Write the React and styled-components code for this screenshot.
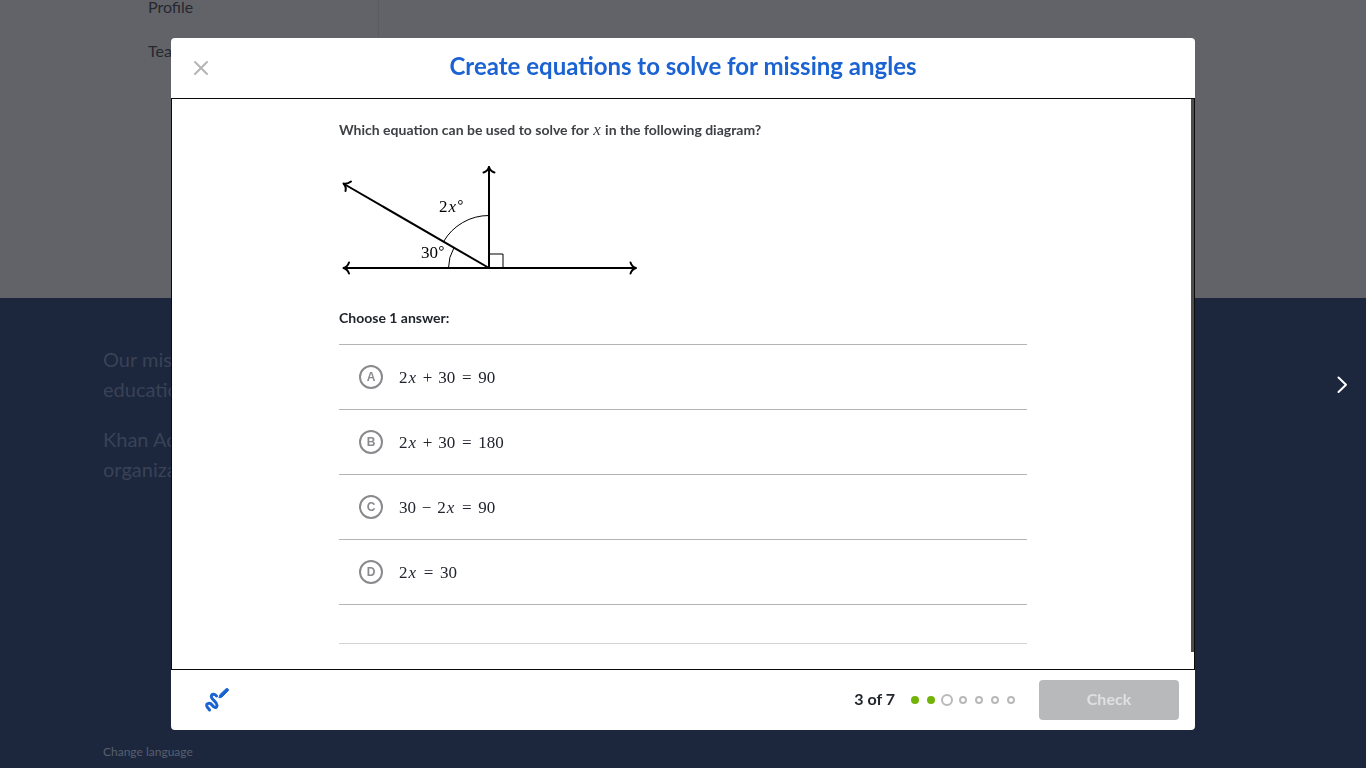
import React, { useState } from 'react';
import styled, { createGlobalStyle } from 'styled-components';

const GlobalStyle = createGlobalStyle`
  * {
    box-sizing: border-box;
  }

  body {
    margin: 0;
    font-family: Lato, 'Noto Sans', sans-serif;
    color: #21242c;
    background: #1c263d;
    overflow: hidden;
  }
`;

const Page = styled.div`
  height: 100vh;
  overflow: hidden;
  display: flex;
  flex-direction: column;
`;

const Dashboard = styled.div`
  display: flex;
  height: 298px;
  background: #626368;
`;

const SideMenu = styled.nav`
  display: flex;
  flex-direction: column;
  gap: 30px;
  width: 379px;
  padding-left: 148px;
  border-right: 1px solid #5a5b60;
`;

const SideLink = styled.a`
  font-size: 16px;
  line-height: 14px;
  color: #26282e;
  text-decoration: none;
`;

const PageFooter = styled.footer`
  flex: 1;
  display: flex;
  flex-direction: column;
  justify-content: space-between;
  padding: 46px 103px 6px;
  background: #1c263d;
  color: #394256;
`;

const Mission = styled.p`
  margin: 0 0 20px;
  font-size: 20px;
  line-height: 30px;
`;

const LanguageLink = styled.a`
  font-size: 12px;
  line-height: 20px;
  color: #596070;
  text-decoration: none;
`;

const Overlay = styled.div`
  position: fixed;
  inset: 0;
  display: flex;
  justify-content: center;
  padding: 38px 64px;
`;

const Modal = styled.section`
  display: flex;
  flex-direction: column;
  width: 100%;
  max-width: 1024px;
  background: #fff;
  border-radius: 4px;
`;

const Header = styled.header`
  display: grid;
  grid-template-columns: 60px 1fr 60px;
  align-items: center;
  height: 60px;
  flex: none;
`;

const Title = styled.h1`
  margin: 0;
  padding-bottom: 4px;
  font-size: 24px;
  line-height: 28px;
  font-weight: 700;
  text-align: center;
  color: #1b63d2;
`;

const IconButton = styled.button`
  display: flex;
  align-items: center;
  justify-content: center;
  width: ${({ $size }) => $size}px;
  height: ${({ $size }) => $size}px;
  padding: 0;
  border: none;
  background: none;
  cursor: pointer;
`;

const Body = styled.div`
  position: relative;
  flex: 1;
  min-height: 0;
  padding: 21px 16px 0;
  border: 1px solid #0b0b0b;
`;

const ScrollThumb = styled.div`
  position: absolute;
  top: 0;
  right: 0;
  bottom: 17px;
  width: 3px;
  background: #4c4c4c;
`;

const Exercise = styled.form`
  max-width: 688px;
  margin: 0 auto;
`;

const Question = styled.p`
  margin: 0 0 18px;
  font-size: 14px;
  line-height: 20px;
  font-weight: 700;
  color: #3f4045;
`;

const Expression = styled('math')`
  font-family: 'Liberation Serif', serif;
  font-size: 17px;
  font-weight: 400;
  color: ${({ $color }) => $color || '#21242c'};

  mi {
    padding: 0 1px;
    font-style: italic;
    text-transform: none;
  }

  > mo {
    padding: 0 2px;
  }

  msup {
    font-family: 'DejaVu Math TeX Gyre', serif;
  }

  mn,
  mi {
    font-family: 'Liberation Serif', serif;
  }
`;

const Figure = styled.figure`
  position: relative;
  width: 300px;
  margin: 0 0 30px;

  svg {
    display: block;
  }
`;

const AngleLabel = styled.span`
  position: absolute;
  left: ${({ $x }) => $x}px;
  top: ${({ $y }) => $y}px;
  line-height: 20px;
`;

const Choices = styled.fieldset`
  margin: 0;
  padding: 0;
  border: none;
`;

const Legend = styled.legend`
  margin-bottom: 16px;
  padding: 0;
  font-size: 14px;
  line-height: 20px;
  font-weight: 700;
`;

const ChoiceList = styled.ul`
  margin: 0;
  padding: 0;
  list-style: none;
  border-top: 1px solid #b3b4b7;
`;

const ChoiceItem = styled.li`
  border-bottom: 1px solid #b3b4b7;
`;

const ChoiceLabel = styled.label`
  display: flex;
  align-items: center;
  gap: 16px;
  height: 64px;
  padding-left: 20px;
  cursor: pointer;
`;

const Bubble = styled.span`
  display: grid;
  place-items: center;

  > * {
    grid-area: 1 / 1;
  }
`;

const Radio = styled.input`
  appearance: none;
  width: 24px;
  height: 24px;
  margin: 0;
  border: 2px solid #898a8d;
  border-radius: 50%;

  &:checked {
    border-color: #1b63d2;
    background: #1b63d2;
  }
`;

const Letter = styled.span`
  font-family: 'Liberation Sans', sans-serif;
  font-size: 12px;
  line-height: 16px;
  font-weight: 700;
  color: ${({ $checked }) => ($checked ? '#fff' : '#898a8d')};
  pointer-events: none;
`;

const Divider = styled.hr`
  margin: 38px 0 0;
  border: none;
  border-top: 1px solid #d2d3d5;
`;

const Footer = styled.footer`
  display: flex;
  align-items: center;
  height: 60px;
  flex: none;
  padding: 0 16px 0 26px;
`;

const Progress = styled.div`
  display: flex;
  align-items: center;
  gap: 12px;
  margin: 0 20px 0 auto;
`;

const Count = styled.span`
  padding-bottom: 2px;
  font-size: 16px;
  line-height: 20px;
  font-weight: 700;
`;

const Dots = styled.div`
  display: flex;
`;

const DotSlot = styled.span`
  display: flex;
  align-items: center;
  justify-content: center;
  width: 16px;
  height: 16px;
`;

const Dot = styled.span`
  width: ${({ $state }) => ($state === 'current' ? 12 : 8)}px;
  height: ${({ $state }) => ($state === 'current' ? 12 : 8)}px;
  border: 2px solid ${({ $state }) => ($state === 'done' ? '#71b307' : '#b8b9bb')};
  border-radius: 50%;
  background: ${({ $state }) => ($state === 'done' ? '#71b307' : '#fff')};
`;

const CheckButton = styled.button`
  width: 140px;
  height: 40px;
  padding: 0 0 4px;
  border: none;
  border-radius: 4px;
  background: #b8b9bb;
  color: #dfe0e1;
  font-family: inherit;
  font-size: 16px;
  font-weight: 700;
`;

const NextArrow = styled.div`
  position: fixed;
  top: 0;
  right: 6px;
  bottom: 0;
  display: flex;
  align-items: center;
`;

const choices = [
    { letter: 'A', parts: ['2', 'x', '+', '30', '=', '90'] },
    { letter: 'B', parts: ['2', 'x', '+', '30', '=', '180'] },
    { letter: 'C', parts: ['30', '−', '2', 'x', '=', '90'] },
    { letter: 'D', parts: ['2', 'x', '=', '30'] },
];

const dots = ['done', 'done', 'current', 'todo', 'todo', 'todo', 'todo'];

const renderPart = (part, i) => {
    if (/\d/.test(part)) return <mn key={i}>{part}</mn>;
    if (part === 'x') return <mi key={i}>x</mi>;
    return <mo key={i}>{part}</mo>;
};

const Diagram = () => (
    <Figure>
        <svg width="300" height="120" viewBox="0 0 300 120" fill="none" stroke="#000" role="img" aria-label="Angles on a line">
            <g strokeWidth="2" strokeLinecap="round" strokeLinejoin="round">
                <path d="M5 110H296M150 110V9M150 110L5 26" />
                <path d="M10 104.500C9 107.500 6.500 109.500 4.500 110C6.500 110.500 9 112.500 10 115.500" />
                <path d="M291.500 104.500C292.500 107.500 295 109.500 297 110C295 110.500 292.500 112.500 291.500 115.500" />
                <path d="M144.500 14.500C147.500 13.500 149.500 11 150 9C150.500 11 152.500 13.500 155.500 14.500" />
                <path d="M12 23.500C9.500 25.500 6.500 26 4.500 25.500C6 27 7.200 30 6.500 33" />
            </g>
            <path d="M150 57.500A52.500 52.500 0 0 0 104.500 83.700M109.500 110A40.500 40.500 0 0 1 115 89.700M150 96H164V110" strokeWidth="1" />
        </svg>
        <AngleLabel $x={100} $y={38}>
            <Expression $color="#000"><mn>2</mn><msup><mi>x</mi><mo>∘</mo></msup></Expression>
        </AngleLabel>
        <AngleLabel $x={82} $y={84}>
            <Expression $color="#000"><msup><mn>30</mn><mo>∘</mo></msup></Expression>
        </AngleLabel>
    </Figure>
);

const App = () => {
    const [answer, setAnswer] = useState('');

    return (
        <>
            <GlobalStyle />
            <Page>
                <Dashboard>
                    <SideMenu>
                        <SideLink href="#profile">Profile</SideLink>
                        <SideLink href="#teachers">Teachers</SideLink>
                    </SideMenu>
                </Dashboard>
                <PageFooter>
                    <div>
                        <Mission>Our mission is to provide a free, world-class<br />education to anyone, anywhere.</Mission>
                        <Mission>Khan Academy is a nonprofit<br />organization.</Mission>
                    </div>
                    <LanguageLink href="#language">Change language</LanguageLink>
                </PageFooter>
            </Page>

            <Overlay>
                <NextArrow>
                    <IconButton $size={36} aria-label="Next">
                        <svg width="24" height="24" viewBox="0 0 24 24" fill="none" stroke="#fff" strokeWidth="2" strokeLinecap="round" strokeLinejoin="round">
                            <path d="M8.500 5.500L16 12.700L8.500 20" />
                        </svg>
                    </IconButton>
                </NextArrow>
                <Modal role="dialog" aria-labelledby="title">
                    <Header>
                        <IconButton $size={60} aria-label="Close">
                            <svg width="16" height="16" viewBox="0 0 16 16" stroke="#b4b5b7" strokeWidth="2" strokeLinecap="round">
                                <path d="M2 2L14 14M14 2L2 14" />
                            </svg>
                        </IconButton>
                        <Title id="title">Create equations to solve for missing angles</Title>
                    </Header>

                    <Body>
                        <Exercise>
                            <Question>
                                Which equation can be used to solve for <Expression $color="#3f4045"><mi>x</mi></Expression> in the following diagram?
                            </Question>
                            <Diagram />
                            <Choices>
                                <Legend>Choose 1 answer:</Legend>
                                <ChoiceList>
                                    {choices.map(({ letter, parts }) => (
                                        <ChoiceItem key={letter}>
                                            <ChoiceLabel>
                                                <Bubble>
                                                    <Radio
                                                        type="radio"
                                                        name="answer"
                                                        value={letter}
                                                        checked={answer === letter}
                                                        onChange={(e) => setAnswer(e.target.value)}
                                                    />
                                                    <Letter $checked={answer === letter}>{letter}</Letter>
                                                </Bubble>
                                                <Expression>{parts.map(renderPart)}</Expression>
                                            </ChoiceLabel>
                                        </ChoiceItem>
                                    ))}
                                </ChoiceList>
                            </Choices>
                            <Divider />
                        </Exercise>
                        <ScrollThumb />
                    </Body>

                    <Footer>
                        <IconButton $size={40} aria-label="Scratchpad">
                            <svg width="24" height="24" viewBox="0 0 24 24" fill="none" stroke="#1b63d2" strokeLinecap="round" strokeLinejoin="round">
                                <path d="M11.500 8C10 5.500 6.500 5.500 6.300 8.500C6.200 12 12.500 13.500 12 17.500C11.500 21 8.500 19 7 17C5 14.300 1.300 15 1.800 18C2.200 20 4 20.500 4.500 22" strokeWidth="3" />
                                <path d="M14 9.500L15 6.500L21 0.800Q22.500 0 23.200 1Q23.800 2 23 3L17 9Z" fill="#1b63d2" strokeWidth="1" />
                            </svg>
                        </IconButton>
                        <Progress>
                            <Count>3 of 7</Count>
                            <Dots>
                                {dots.map((state, i) => (
                                    <DotSlot key={i}>
                                        <Dot $state={state} />
                                    </DotSlot>
                                ))}
                            </Dots>
                        </Progress>
                        <CheckButton disabled={!answer}>Check</CheckButton>
                    </Footer>
                </Modal>
            </Overlay>
        </>
    );
};

export default App;
